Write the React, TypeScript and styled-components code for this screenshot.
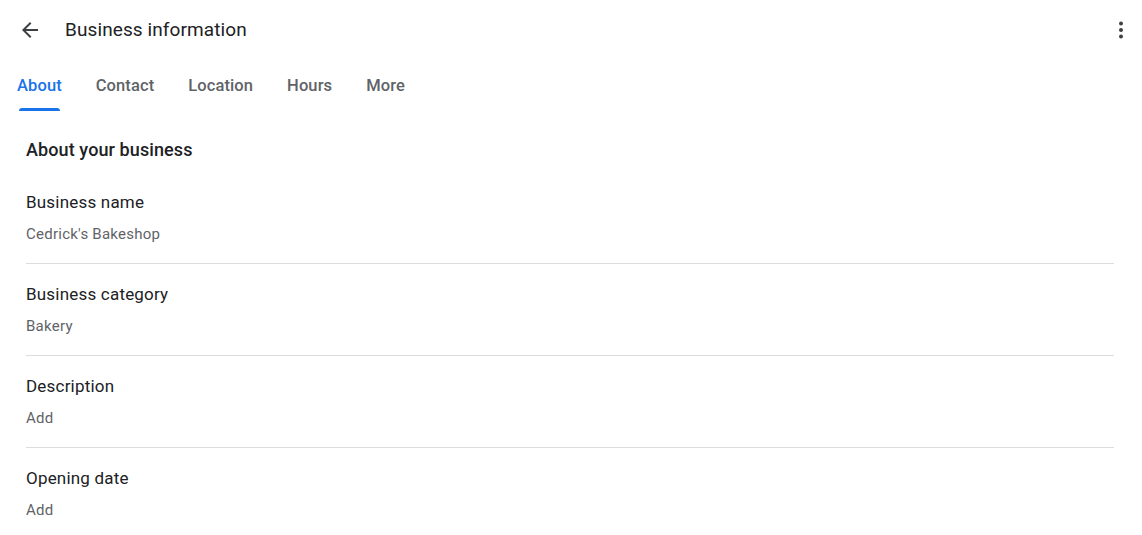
import styled, { createGlobalStyle } from "styled-components";

const GlobalStyle = createGlobalStyle`
	body {
		margin: 0;
		background: #fff;
		font-family: Roboto, "Noto Sans", Arial, sans-serif;
		color: #202124;
	}
`;

const tabs = ["About", "Contact", "Location", "Hours", "More"];

const fields = [
	{ label: "Business name", value: "Cedrick's Bakeshop" },
	{ label: "Business category", value: "Bakery" },
	{ label: "Description", value: "Add" },
	{ label: "Opening date", value: "Add" },
];

const BackIcon = () => (
	<svg width="24" height="24" viewBox="0 0 24 24" fill="#3c4043">
		<path d="M20 11H7.83l5.59-5.59L12 4l-8 8 8 8 1.41-1.41L7.83 13H20v-2z" />
	</svg>
);

const MoreIcon = () => (
	<svg width="24" height="24" viewBox="0 0 24 24" fill="#3c4043">
		<circle cx="12" cy="5.5" r="2" />
		<circle cx="12" cy="12" r="2" />
		<circle cx="12" cy="18.5" r="2" />
	</svg>
);

export default function App() {
	return (
		<Page>
			<GlobalStyle />
			<Header>
				<IconButton aria-label="Back">
					<BackIcon />
				</IconButton>
				<Title>Business information</Title>
				<MenuButton aria-label="More options">
					<MoreIcon />
				</MenuButton>
			</Header>
			<Tabs>
				{tabs.map((t, i) => (
					<Tab key={t} $active={i === 0}>
						{t}
					</Tab>
				))}
			</Tabs>
			<Content>
				<Heading>About your business</Heading>
				{fields.map((f, i) => (
					<Field key={f.label} $last={i === fields.length - 1}>
						<Label>{f.label}</Label>
						<Value>{f.value}</Value>
					</Field>
				))}
			</Content>
		</Page>
	);
}

const Page = styled.div`
	width: 100%;
	min-height: 535px;
`;

const Header = styled.div`
	display: flex;
	align-items: center;
	height: 60px;
	padding: 0 9px 0 18px;
`;

const IconButton = styled.button`
	display: flex;
	align-items: center;
	justify-content: center;
	width: 24px;
	height: 24px;
	padding: 0;
	border: none;
	background: none;
	cursor: pointer;
`;

const MenuButton = styled(IconButton)`
	margin-left: auto;
`;

const Title = styled.div`
	margin-left: 23px;
	font-size: 19px;
	line-height: 28px;
	color: #202124;
	letter-spacing: 0.1px;
`;

const Tabs = styled.div`
	display: flex;
	height: 51px;
`;

const Tab = styled.div<{ $active?: boolean }>`
	position: relative;
	display: flex;
	align-items: center;
	padding: 0 17px;
	font-size: 16.5px;
	font-weight: 500;
	letter-spacing: 0.1px;
	color: ${(p) => (p.$active ? "#1a73e8" : "#5f6368")};
	cursor: pointer;

	&::after {
		content: "";
		display: ${(p) => (p.$active ? "block" : "none")};
		position: absolute;
		left: 19px;
		right: 19px;
		bottom: 0;
		height: 3px;
		border-radius: 3px 3px 0 0;
		background: #1a73e8;
	}
`;

const Content = styled.div`
	padding: 27px 28px 0 26px;
`;

const Heading = styled.div`
	font-size: 18px;
	line-height: 24px;
	font-weight: 500;
	letter-spacing: 0.1px;
	color: #202124;
	margin-bottom: 10px;
`;

const Field = styled.div<{ $last?: boolean }>`
	display: flex;
	flex-direction: column;
	gap: 10px;
	padding: 18px 0 19px;
	border-bottom: ${(p) => (p.$last ? "none" : "1px solid #dadce0")};
`;

const Label = styled.div`
	font-size: 17px;
	line-height: 24px;
	letter-spacing: 0.2px;
	color: #202124;
`;

const Value = styled.div`
	font-size: 15px;
	line-height: 20px;
	letter-spacing: 0.25px;
	color: #5f6368;
`;
